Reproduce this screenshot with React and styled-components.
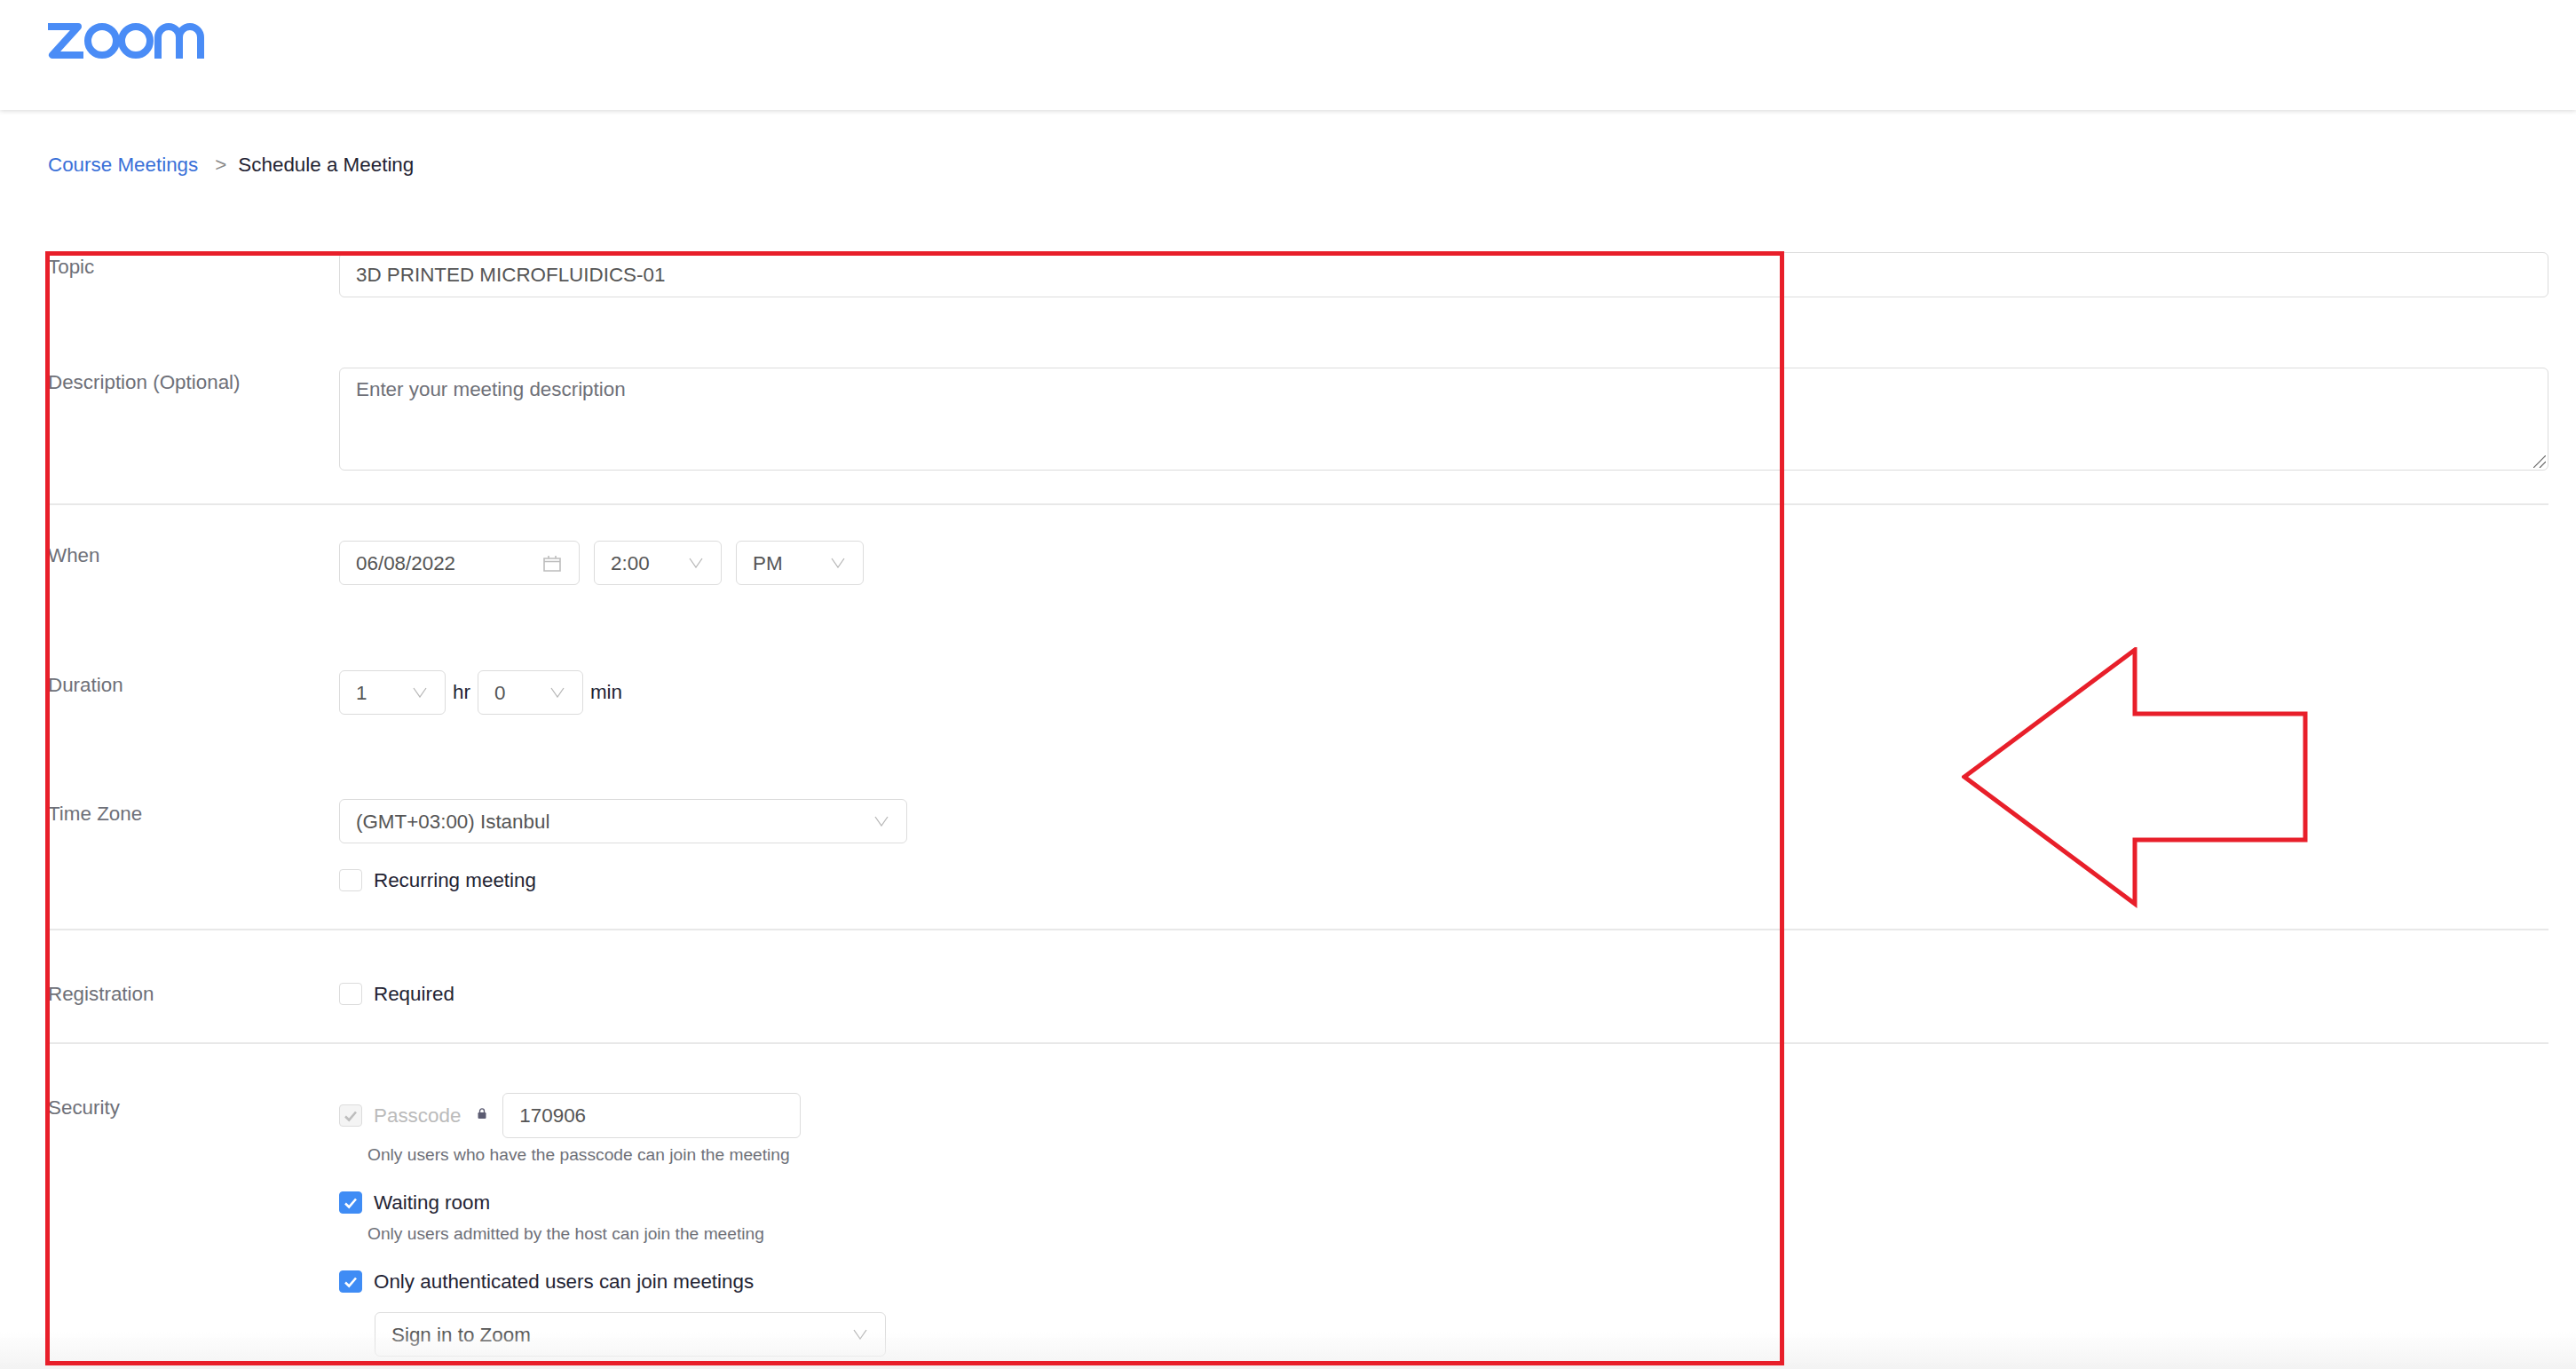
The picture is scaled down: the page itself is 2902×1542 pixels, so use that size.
import React from 'react';
import styled, { createGlobalStyle } from 'styled-components';

const GlobalStyle = createGlobalStyle`
  html, body {
    margin: 0;
    height: 100%;
    background: #fff;
    overflow: hidden;
  }
  body {
    font-family: "Liberation Sans", Arial, sans-serif;
    font-size: 22.4px;
    color: #232333;
  }
`;

const ZoomLogo = () => (
  <LogoSvg viewBox="0 0 177 40" aria-label="zoom">
    <g fill="none" stroke="#4a8cf6" strokeWidth="8">
      <path d="M1 4H35L6 36H41" strokeLinejoin="round" />
      <circle cx="62" cy="20" r="16" />
      <circle cx="100" cy="20" r="16" />
      <path d="M125 40V16A12 12 0 0 1 149 16V40M149 16A12 12 0 0 1 173 16V40" />
    </g>
  </LogoSvg>
);

const Chevron = () => (
  <ChevronSvg viewBox="0 0 16 12">
    <path d="M1 1L8 11L15 1" fill="none" stroke="#b8b8b8" strokeWidth="1.3" />
  </ChevronSvg>
);

const CalendarIcon = () => (
  <CalendarSvg viewBox="0 0 20 19">
    <path d="M1 4H19V18H1ZM1 7.5H19M6 1V4M14 1V4" fill="none" stroke="#bdbdbd" strokeWidth="1.6" />
  </CalendarSvg>
);

const LockIcon = () => (
  <LockSvg viewBox="0 0 10 12">
    <path d="M2.5 5V3.4a2.5 2.5 0 0 1 5 0V5" fill="none" stroke="#5c5c72" strokeWidth="1.4" />
    <rect x="0.5" y="5" width="9" height="7" rx="1.2" fill="#5c5c72" />
  </LockSvg>
);

const Select = ({ width, value }) => (
  <SelectBox $width={width}>
    {value}
    <Chevron />
  </SelectBox>
);

const Check = ({ state, label }) => (
  <CheckRow $disabled={state === 'disabled'}>
    <CheckBox $state={state}>
      {state && (
        <svg viewBox="0 0 16 14" width="16" height="14">
          <path d="M2 7.5L6.2 11.5L14 2.5" fill="none" stroke={state === 'disabled' ? '#bdbdbd' : '#fff'} strokeWidth="2.6" />
        </svg>
      )}
    </CheckBox>
    {label}
  </CheckRow>
);

export default function App() {
  return (
    <>
      <GlobalStyle />
      <Header>
        <ZoomLogo />
      </Header>
      <Main>
        <Breadcrumb>
          <Crumb>Course Meetings</Crumb>
          <Separator>&gt;</Separator>
          <span>Schedule a Meeting</span>
        </Breadcrumb>

        <Row>
          <Label>Topic</Label>
          <TextInput readOnly defaultValue="3D PRINTED MICROFLUIDICS-01" />
        </Row>
        <Row $top={79}>
          <Label>Description (Optional)</Label>
          <AreaWrap>
            <TextArea placeholder="Enter your meeting description" />
            <ResizeGrip viewBox="0 0 14 14">
              <path d="M0 14L14 0M7 14L14 7" stroke="#666" strokeWidth="1.2" />
            </ResizeGrip>
          </AreaWrap>
        </Row>
        <Divider $top={37} />

        <Row $top={40}>
          <Label>When</Label>
          <Inline $gap={16}>
            <DateBox>
              06/08/2022
              <CalendarIcon />
            </DateBox>
            <Select width={144} value="2:00" />
            <Select width={144} value="PM" />
          </Inline>
        </Row>
        <Row $top={96}>
          <Label>Duration</Label>
          <Inline $gap={8}>
            <Select width={120} value="1" />
            <span>hr</span>
            <Select width={119} value="0" />
            <span>min</span>
          </Inline>
        </Row>
        <Row $top={95}>
          <Label>Time Zone</Label>
          <div>
            <Select width={640} value="(GMT+03:00) Istanbul" />
            <Stack $top={29}>
              <Check label="Recurring meeting" />
            </Stack>
          </div>
        </Row>
        <Divider $top={42} />

        <Row $top={55}>
          <Label>Registration</Label>
          <Stack $top={4}>
            <Check label="Required" />
          </Stack>
        </Row>
        <Divider $top={41} />

        <Row $top={55}>
          <Label>Security</Label>
          <div>
            <Inline $gap={0}>
              <Check state="disabled" label="Passcode" />
              <LockIcon />
              <PasscodeInput readOnly defaultValue="170906" />
            </Inline>
            <Helper $top={8}>Only users who have the passcode can join the meeting</Helper>
            <Stack $top={30}>
              <Check state="on" label="Waiting room" />
            </Stack>
            <Helper $top={12}>Only users admitted by the host can join the meeting</Helper>
            <Stack $top={30}>
              <Check state="on" label="Only authenticated users can join meetings" />
            </Stack>
            <Indent>
              <Select width={576} value="Sign in to Zoom" />
            </Indent>
          </div>
        </Row>
      </Main>

      <BottomFade />
      <RedFrame />
      <RedArrow viewBox="0 0 394 296">
        <path d="M3 146L195 3V75H387V217H195V289Z" fill="none" stroke="#e81f2a" strokeWidth="5" />
      </RedArrow>
    </>
  );
}

const Header = styled.header`
  height: 98px;
  padding: 26px 0 0 53px;
  box-shadow: 0 1px 5px rgba(0, 0, 0, 0.16);
`;

const LogoSvg = styled.svg`
  display: block;
  width: 177px;
  height: 40px;
`;

const Main = styled.main`
  padding: 0 31px 0 54px;
`;

const Breadcrumb = styled.nav`
  display: flex;
  align-items: center;
  height: 26px;
  margin: 49px 0 85px;
  line-height: 26px;
`;

const Crumb = styled.a`
  color: #3a70d8;
`;

const Separator = styled.span`
  margin: 0 13px 0 19px;
  color: #8a8a8a;
`;

const Row = styled.section`
  display: grid;
  grid-template-columns: 328px 1fr;
  margin-top: ${p => p.$top || 0}px;
`;

const Label = styled.label`
  padding-top: 4px;
  line-height: 26px;
  color: #6e7078;
`;

const fieldBorder = '1px solid #dcdcdc';

const TextInput = styled.input`
  box-sizing: border-box;
  width: 100%;
  height: 51px;
  padding: 0 18px;
  border: ${fieldBorder};
  border-radius: 6px;
  outline: none;
  font: inherit;
  color: #555;
`;

const AreaWrap = styled.div`
  position: relative;
`;

const TextArea = styled.textarea`
  display: block;
  box-sizing: border-box;
  width: 100%;
  height: 116px;
  padding: 11px 18px;
  border: ${fieldBorder};
  border-radius: 6px;
  outline: none;
  resize: none;
  font: inherit;
  line-height: 26px;
  color: #555;
  &::placeholder {
    color: #6e7078;
    opacity: 1;
  }
`;

const ResizeGrip = styled.svg`
  position: absolute;
  right: 3px;
  bottom: 3px;
  width: 14px;
  height: 14px;
`;

const Divider = styled.hr`
  height: 2px;
  margin: ${p => p.$top}px 0 0;
  border: 0;
  background: #e8e8e8;
`;

const Inline = styled.div`
  display: flex;
  align-items: center;
  gap: ${p => p.$gap}px;
`;

const SelectBox = styled.div`
  display: flex;
  align-items: center;
  justify-content: space-between;
  box-sizing: border-box;
  width: ${p => p.$width}px;
  height: 50px;
  padding: 1px 20px 0 18px;
  border: ${fieldBorder};
  border-radius: 6px;
  color: #555;
`;

const DateBox = styled(SelectBox)`
  width: 271px;
`;

const ChevronSvg = styled.svg`
  width: 16px;
  height: 12px;
  flex: none;
  margin-top: -1px;
`;

const CalendarSvg = styled.svg`
  width: 20px;
  height: 19px;
  flex: none;
  margin-top: -1px;
`;

const LockSvg = styled.svg`
  width: 10px;
  height: 12px;
  flex: none;
  margin: -6px 18px 0 19px;
`;

const Stack = styled.div`
  margin-top: ${p => p.$top}px;
`;

const CheckRow = styled.div`
  display: flex;
  align-items: center;
  gap: 13px;
  height: 25px;
  color: ${p => (p.$disabled ? '#bbb' : '#232333')};
`;

const CheckBox = styled.span`
  display: flex;
  align-items: center;
  justify-content: center;
  box-sizing: border-box;
  flex: none;
  width: 26px;
  height: 25px;
  border: 1px solid ${p => (p.$state === 'on' ? '#3f8cf5' : '#dcdcdc')};
  border-radius: 4px;
  background: ${p => (p.$state === 'on' ? '#3f8cf5' : p.$state === 'disabled' ? '#f4f4f4' : '#fff')};
`;

const PasscodeInput = styled(TextInput)`
  width: 336px;
`;

const Helper = styled.div`
  margin-top: ${p => p.$top}px;
  padding-left: 32px;
  font-size: 19.2px;
  line-height: 22px;
  color: #6e7078;
`;

const Indent = styled.div`
  margin: 22px 0 0 40px;
`;

const BottomFade = styled.div`
  position: fixed;
  left: 0;
  right: 0;
  bottom: 0;
  height: 42px;
  background: linear-gradient(rgba(243, 243, 243, 0), #f3f3f3);
`;

const RedFrame = styled.div`
  position: fixed;
  left: 51px;
  top: 283px;
  width: 1949px;
  height: 1245px;
  border: 5px solid #e81f2a;
`;

const RedArrow = styled.svg`
  position: fixed;
  left: 2210px;
  top: 729px;
  width: 394px;
  height: 296px;
`;
